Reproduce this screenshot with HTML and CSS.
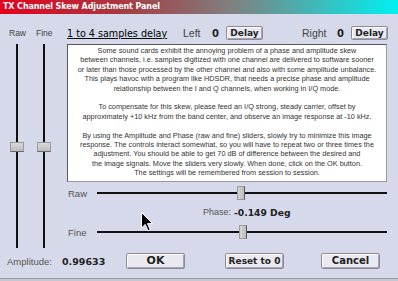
FILE: index.html
```html
<!DOCTYPE html>
<html>
<head>
  <title>TX Channel Skew Adjustment Panel</title>
  <link rel="stylesheet" href="styles.css">
</head>
<body>
  <div class="window">
    <div class="titlebar">TX Channel Skew Adjustment Panel</div>

    <div class="main">
      <div class="head-left">
        <span class="lbl-raw">Raw</span>
        <span class="lbl-fine">Fine</span>
      </div>
      <div class="head-right">
        <span class="delay-title">1 to 4 samples delay</span>
        <span class="side side-left">Left</span>
        <span class="side-val">0</span>
        <button class="btn btn-delay">Delay</button>
        <span class="side side-right">Right</span>
        <span class="side-val">0</span>
        <button class="btn btn-delay">Delay</button>
      </div>

      <div class="vsliders">
        <div class="vslider">
          <div class="vline top"></div>
          <div class="vthumb"></div>
          <div class="vline"></div>
        </div>
        <div class="vslider">
          <div class="vline top"></div>
          <div class="vthumb"></div>
          <div class="vline"></div>
        </div>
      </div>

      <div class="panel">
        <div class="info">
          <p>Some sound cards exhibit the annoying problem of a phase and amplitude skew<br>
          between channels, i.e. samples digitized with one channel are delivered to software sooner<br>
          or later than those processed by the other channel and also with some amplitude unbalance.<br>
          This plays havoc with a program like HDSDR, that needs a precise phase and amplitude<br>
          relationship between the I and Q channels, when working in I/Q mode.</p>
          <p>To compensate for this skew, please feed an I/Q strong, steady carrier, offset by<br>
          approximately +10 kHz from the band center, and observe an image response at -10 kHz.</p>
          <p>By using the Amplitude and Phase (raw and fine) sliders, slowly try to minimize this image<br>
          response. The controls interact somewhat, so you will have to repeat two or three times the<br>
          adjustment. You should be able to get 70 dB of difference between the desired and<br>
          the image signals. Move the sliders very slowly. When done, click on the OK button.<br>
          The settings will be remembered from session to session.</p>
        </div>

        <div class="hrow raw-row">
          <span class="hlabel">Raw</span>
          <div class="hslider">
            <div class="hline raw-left"></div>
            <div class="hthumb"></div>
            <div class="hline grow"></div>
          </div>
        </div>

        <div class="phase-row">
          <span class="phase-lbl">Phase:</span>
          <span class="phase-val">-0.149 Deg</span>
        </div>

        <div class="hrow fine-row">
          <span class="hlabel">Fine</span>
          <div class="hslider">
            <div class="hline fine-left"></div>
            <div class="hthumb"></div>
            <div class="hline grow"></div>
          </div>
        </div>
      </div>
    </div>

    <div class="footer">
      <span class="amp-lbl">Amplitude:</span>
      <span class="amp-val">0.99633</span>
      <button class="btn btn-big btn-ok">OK</button>
      <button class="btn btn-big btn-reset">Reset to 0</button>
      <button class="btn btn-big btn-cancel">Cancel</button>
    </div>

    <div class="bottom-edge"></div>

    <svg class="cursor" width="13" height="20" viewBox="0 0 13 20">
      <path d="M0.5 0.5 L0.5 16 L4.2 12.4 L7 18.8 L9.2 17.8 L6.5 11.6 L11.5 11.6 Z" fill="#000" stroke="#fff" stroke-width="1"/>
    </svg>
  </div>
</body>
</html>
```

FILE: styles.css
```css
body {
  margin: 0;
  background: #d5d9ea;
}
.window {
  position: relative;
  width: 398px;
  height: 281px;
  overflow: hidden;
  background: #d5d9ea;
  font-family: "Liberation Sans", Arial, sans-serif;
  color: #222;
}
.titlebar {
  height: 14px;
  line-height: 14px;
  padding-left: 3px;
  background: linear-gradient(to right, #e6001c 0%, #a83840 30%, #808080 58%, #00f0f0 100%);
  color: #fff;
  font-weight: bold;
  font-size: 8px;
  font-family: "DejaVu Sans", Verdana, sans-serif;
  letter-spacing: -0.1px;
}
.main {
  display: grid;
  grid-template-columns: 67px 331px;
  grid-template-rows: 30px 204px;
}

/* header row */
.head-left {
  display: flex;
  align-items: center;
  padding: 8px 0 0 9px;
  font-size: 8.5px;
  color: #444;
}
.lbl-fine {
  margin-left: 10px;
}
.head-right {
  display: flex;
  align-items: center;
  padding-top: 8px;
}
.delay-title {
  width: 116px;
  font-family: "DejaVu Sans", Verdana, sans-serif;
  font-size: 9.6px;
  text-decoration: underline;
  color: #000;
  white-space: nowrap;
}
.side {
  font-size: 10.5px;
  color: #444;
}
.side-left {
  width: 29px;
}
.side-right {
  width: 35px;
  margin-left: 39px;
}
.side-val {
  width: 14px;
  font-family: "DejaVu Sans", Verdana, sans-serif;
  font-weight: bold;
  font-size: 10px;
}

/* buttons */
.btn {
  padding: 0;
  background: #e9e9ef;
  border: 1px solid #8a8a98;
  border-radius: 2px;
  box-shadow: inset 1px 1px 0 #fff, inset -1px -1px 0 #a4a4b2;
  font-family: "DejaVu Sans", Verdana, sans-serif;
  font-weight: bold;
  color: #222;
  cursor: pointer;
}
.btn-delay {
  width: 37px;
  height: 14px;
  font-size: 9px;
  line-height: 12px;
}
.btn-big {
  width: 59px;
  height: 16px;
  font-size: 10px;
  line-height: 14px;
}
.btn-ok {
  font-size: 11px;
}
.btn-reset {
  margin-left: 40px;
  font-size: 9px;
}
.btn-cancel {
  margin-left: 37px;
}

/* vertical sliders */
.vsliders {
  display: flex;
  padding-left: 10px;
  gap: 13px;
}
.vslider {
  width: 14px;
  display: flex;
  flex-direction: column;
  align-items: center;
}
.vline {
  width: 2px;
  height: 96px;
  background: #111;
}
.vline.top {
  height: 98px;
}
.vthumb {
  width: 14px;
  height: 10px;
  box-sizing: border-box;
  background: linear-gradient(#d8d8d8, #bdbdbd);
  border: 1px solid #9a9a9a;
  border-bottom-color: #6a6a6a;
}

/* text panel */
.panel {
  display: flex;
  flex-direction: column;
}
.info {
  width: 320px;
  height: 138px;
  box-sizing: border-box;
  padding-top: 1px;
  background: #fff;
  border: 1px solid #5a5a5a;
  border-right-color: #9a9a9a;
  border-bottom-color: #9a9a9a;
  text-align: center;
  font-size: 7.3px;
  line-height: 9.4px;
  color: #333;
  white-space: nowrap;
  overflow: hidden;
}
.info p {
  margin: 0 0 9.4px;
}
.hrow {
  display: flex;
  align-items: center;
  height: 14px;
  margin-top: 4px;
}
.fine-row {
  margin-top: 1px;
}
.hlabel {
  width: 29px;
  padding-left: 1px;
  font-size: 9.5px;
  color: #555;
}
.hslider {
  width: 290px;
  display: flex;
  align-items: center;
}
.hline {
  height: 2px;
  background: #111;
}
.hline.raw-left {
  width: 140px;
}
.hline.fine-left {
  width: 142px;
}
.hline.grow {
  flex: 1;
}
.hthumb {
  width: 8px;
  height: 14px;
  box-sizing: border-box;
  background: linear-gradient(to right, #d4d4d4, #bcbcbc);
  border: 1px solid #9a9a9a;
  border-right-color: #5a5a5a;
}
.phase-row {
  display: flex;
  align-items: center;
  height: 24px;
  padding-left: 136px;
}
.phase-lbl {
  font-size: 9px;
  color: #555;
  width: 31px;
}
.phase-val {
  font-family: "DejaVu Sans", Verdana, sans-serif;
  font-weight: bold;
  font-size: 9.2px;
  color: #222;
}

/* footer */
.footer {
  display: flex;
  align-items: center;
  padding: 5px 0 0 7px;
}
.amp-lbl {
  width: 55px;
  font-size: 9.5px;
  color: #555;
}
.amp-val {
  width: 64px;
  font-family: "DejaVu Sans", Verdana, sans-serif;
  font-weight: bold;
  font-size: 9.5px;
  color: #222;
}
.bottom-edge {
  margin-top: 9px;
  height: 4px;
  border-top: 1px solid #9a9aa6;
  background: #c4c6d0;
}
.cursor {
  position: absolute;
  left: 141px;
  top: 212px;
}
```
